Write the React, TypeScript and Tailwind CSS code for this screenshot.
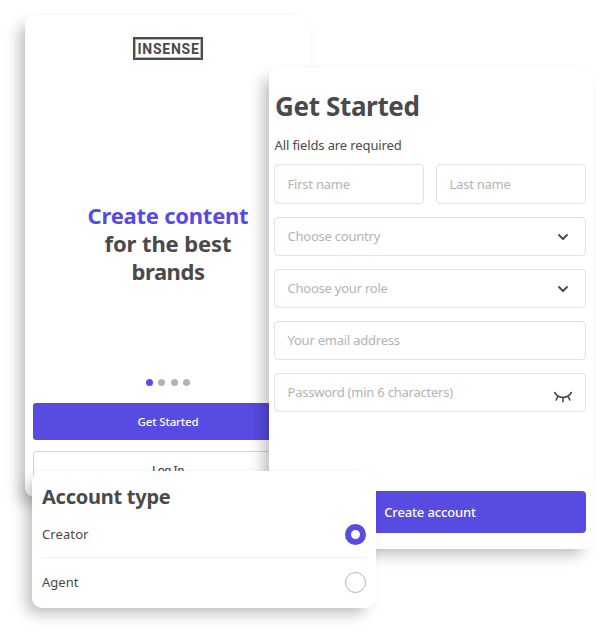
import React from "react";
import { ChevronDown } from "lucide-react";

function Field({ label, icon, className = "h-[39px]" }: { label: React.ReactNode; icon?: React.ReactNode; className?: string }) {
  return (
    <div className={`${className} flex min-w-0 flex-1 items-center justify-between rounded-[4px] border border-[#e2e2e2] pl-[12.500px] pr-[13px] text-[13px] tracking-[-0.23px] text-[#b3b3b3]`}>
      <span className="whitespace-nowrap">{label}</span>
      {icon}
    </div>
  );
}

const chevron = <ChevronDown className="mr-px size-[16px] text-[#4a4a4a]" strokeWidth={2.8} />;

const closedEye = (
  <svg className="relative top-[4px] -mr-[1px] h-[12px] w-[20px] text-[#4a4a4a]" viewBox="0 0 20 12" fill="none" stroke="currentColor" strokeWidth="1.6" strokeLinecap="round">
    <path d="M1.700 1.500C3.500 4.700 6.500 6.500 10 6.500S16.500 4.700 18.300 1.500" />
    <path d="M5 5.200L3.200 9M10 6.500V10.700M15 5.200L16.800 9" />
  </svg>
);

function Welcome() {
  return (
    <section className="absolute left-[25px] top-[15px] flex h-[482px] w-[286px] flex-col items-center rounded-[9px] bg-white px-2 shadow-[-8px_8px_15px_-3px_rgba(0,0,0,0.27),0_0_6px_rgba(0,0,0,0.02)]">
      <div className="mt-[22px] flex h-[23px] w-[70px] shrink-0 items-center justify-center border-[2.500px] border-[#4a4a4a] font-['Roboto',sans-serif] text-[14px] font-bold leading-none text-[#4a4a4a] outline-[0.5px] outline-[#4a4a4a]/40 -outline-offset-[3px]">
        <span className="-mr-px tracking-[0.75px]">INSENSE</span>
      </div>
      <h1 className="mt-[141px] text-center text-[22px] font-bold leading-[28px] text-[#4a4a4a]">
        <span className="block tracking-[-0.24px] text-[#574be2]">Create content</span>
        <span className="block tracking-[-0.1px]">for the best</span>
        <span className="block tracking-[-0.45px]">brands</span>
      </h1>
      <div className="mt-[94px] flex gap-[5.500px]">
        <i className="size-[7px] rounded-full bg-[#574be2]" />
        <i className="size-[7px] rounded-full bg-[#b3b3b3]" />
        <i className="size-[7px] rounded-full bg-[#b3b3b3]" />
        <i className="size-[7px] rounded-full bg-[#b3b3b3]" />
      </div>
      <button className="mt-[17px] h-[37px] w-full shrink-0 rounded-[3px] bg-[#574be2] text-[11.500px] font-medium tracking-[-0.15px] text-white">Get Started</button>
      <button className="mt-[11px] h-[37px] w-full shrink-0 rounded-[3px] border border-[#d3d3d3] text-[11.500px] font-medium tracking-[-0.4px] text-[#4a4a4a]">Log In</button>
    </section>
  );
}

function SignUp() {
  return (
    <section className="absolute left-[269px] top-[68px] flex h-[481px] w-[324px] flex-col rounded-[8px] bg-white pl-[5px] pr-[7px] shadow-[-8px_8px_15px_-3px_rgba(0,0,0,0.27),0_0_6px_rgba(0,0,0,0.02)]">
      <h2 className="ml-px mt-[20px] text-[26px] font-bold leading-[36px] tracking-[-0.35px] text-[#4a4a4a]">Get Started</h2>
      <p className="ml-[0.5px] mt-[11px] text-[13px] leading-[20px] tracking-[-0.12px] text-[#4a4a4a]">All fields are required</p>
      <div className="mt-[9px] flex flex-col gap-[13px]">
        <div className="flex gap-[12px]">
          <Field label="First name" className="h-[40px] pt-px" />
          <Field label="Last name" className="h-[40px] pt-px" />
        </div>
        <div className="flex"><Field label="Choose country" icon={chevron} /></div>
        <div className="flex"><Field label="Choose your role" icon={chevron} /></div>
        <div className="flex"><Field label="Your email address" /></div>
        <div className="flex"><Field label="Password (min 6 characters)" icon={closedEye} /></div>
      </div>
      <button className="mt-[79px] h-[42px] w-full rounded-[4px] bg-[#574be2] pt-px text-[13px] font-medium tracking-[-0.15px] text-white">Create account</button>
    </section>
  );
}

function AccountType() {
  return (
    <section className="absolute left-[32px] top-[471px] flex h-[137px] w-[344px] flex-col rounded-[10px] bg-white px-[10px] shadow-[-8px_8px_15px_-3px_rgba(0,0,0,0.27),0_0_6px_rgba(0,0,0,0.02)]">
      <h3 className="mt-[12px] text-[20px] font-bold leading-[28px] tracking-[-0.25px] text-[#4a4a4a]">Account type</h3>
      <div className="flex h-[47px] items-center justify-between border-b border-[#f2f2f2] text-[13px] text-[#4a4a4a]">
        <span className="pt-px tracking-[0.1px]">Creator</span>
        <i className="size-[21px] rounded-full border-[6px] border-[#574be2]" />
      </div>
      <div className="flex h-[48px] items-center justify-between text-[13px] text-[#4a4a4a]">
        <span className="pt-px">Agent</span>
        <i className="size-[21px] rounded-full border border-[#b3b3b3]" />
      </div>
    </section>
  );
}

export default function App() {
  return (
    <main className="relative h-[640px] w-[616px] overflow-hidden bg-white font-['Noto_Sans',sans-serif]">
      <Welcome />
      <SignUp />
      <AccountType />
    </main>
  );
}
